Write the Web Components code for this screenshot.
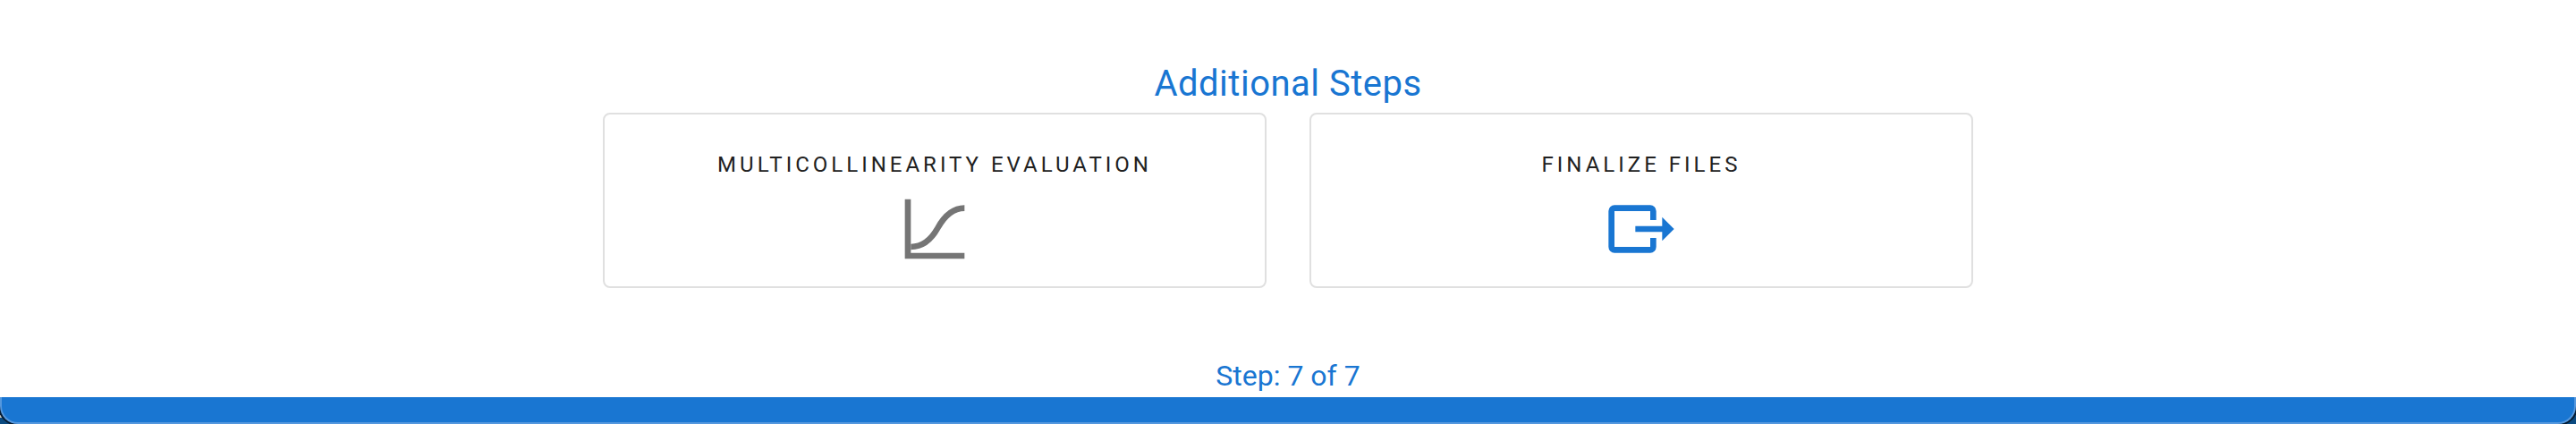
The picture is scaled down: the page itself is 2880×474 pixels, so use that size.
<!DOCTYPE html>
<html lang="en"><head><meta charset="utf-8"><title>Additional Steps</title>
<style>html,body{margin:0;height:100%;background:#fff;overflow:hidden}</style></head>
<body>
<steps-page>
  <step-card slot="cards" label="Multicollinearity Evaluation"><svg width="80" height="80" viewBox="0 0 24 24" fill="none" stroke="#757575" stroke-width="2"><path d="M3 2V21H22"/><path d="M4 18C8 18 11 15.3 13 11.7S18 5 22 5"/></svg></step-card>
  <step-card slot="cards" label="Finalize Files"><svg width="80" height="80" viewBox="0 0 24 24" fill="#1976d2"><path d="M19 8L23 12L19 16V13H10V11H19ZM15 18V15H17V18A2 2 0 0 1 15 20H3A2 2 0 0 1 1 18V6A2 2 0 0 1 3 4H15A2 2 0 0 1 17 6V9H15V6H3V18Z"/></svg></step-card>
</steps-page>
<script>
customElements.define('step-card', class extends HTMLElement {
  constructor() {
    super();
    this.attachShadow({mode:'open'}).innerHTML = `<style>
      :host{display:flex;flex-direction:column;align-items:center;box-sizing:border-box;width:742px;height:196px;border:2px solid #e0e0e0;border-radius:8px;padding-top:32px}
      .label{font-size:24px;line-height:48px;letter-spacing:4px;text-transform:uppercase;color:#212121}
      .icon{display:block;width:80px;height:80px;margin-top:7.5px}
      ::slotted(svg){display:block}
    </style><span class="label"></span><span class="icon"><slot></slot></span>`;
    this.shadowRoot.querySelector('.label').textContent = this.getAttribute('label');
  }
});
customElements.define('window-footer', class extends HTMLElement {
  constructor() {
    super();
    this.attachShadow({mode:'open'}).innerHTML = `<style>
      :host{display:block;height:30px;overflow:hidden;background:linear-gradient(#c8c4bc,#c8c4bc) 0 14px/3px 9px no-repeat,#0b4a80}
      .bar{box-sizing:border-box;height:30px;background:#1976d2;border:2px solid #5598de;border-top:0;border-radius:0 0 20px 20px;box-shadow:0 0 0 2px #061c33}
    </style><div class="bar"></div>`;
  }
});
customElements.define('steps-page', class extends HTMLElement {
  constructor() {
    super();
    this.attachShadow({mode:'open'}).innerHTML = `<style>
      :host{display:flex;flex-direction:column;height:474px;overflow:hidden;font-family:Roboto,sans-serif;color:#1976d2;text-align:center}
      h2{margin:62px 0 0;font-size:40px;line-height:64px;font-weight:400;letter-spacing:.5px}
      .cards{display:flex;justify-content:center;gap:48px}
      .step{margin-top:74px;font-size:32px;line-height:48px}
      window-footer{flex:none}
    </style><h2>Additional Steps</h2><div class="cards"><slot name="cards"></slot></div><div class="step">Step: 7 of 7</div><window-footer></window-footer>`;
  }
});
</script></body></html>
